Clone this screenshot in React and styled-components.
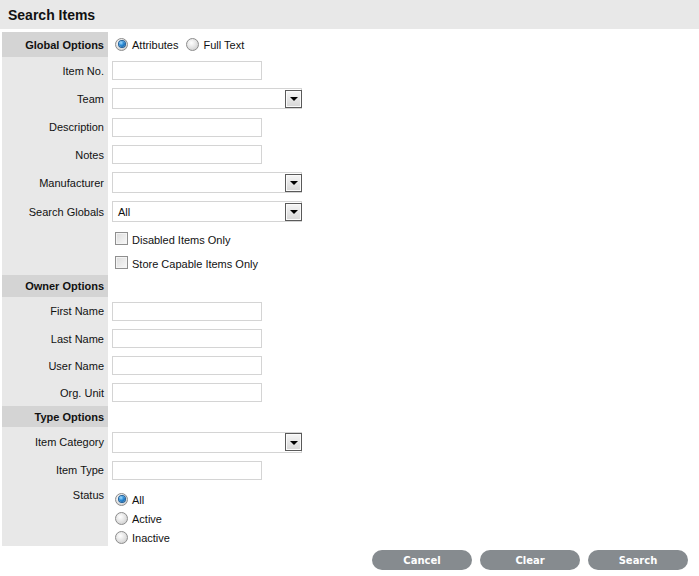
import React from "react";
import styled, { createGlobalStyle } from "styled-components";

///////////////////////////////////

const GlobalStyle = createGlobalStyle`
  body {
    margin: 0;
    background: #ffffff;
    font-family: "Liberation Sans", Arial, sans-serif;
    font-size: 11px;
    color: #111;
  }
`;

const Page = styled.div`
  width: 699px;
`;

const TitleBar = styled.div`
  height: 29px;
  background: #e8e8e8;
  display: flex;
  align-items: center;
  padding-left: 8px;
  font-size: 14px;
  font-weight: bold;
  color: #111;
`;

const Form = styled.div`
  margin-top: 3px;
  padding-left: 2px;
  display: flex;
  flex-direction: column;
`;

const Row = styled.div`
  display: grid;
  grid-template-columns: 106px 1fr;
  height: ${(p) => p.h}px;
`;

const LabelCell = styled.div`
  background: ${(p) => (p.section ? "#d4d4d4" : "#e8e8e8")};
  font-weight: ${(p) => (p.section ? "bold" : "normal")};
  display: flex;
  justify-content: flex-end;
  align-items: ${(p) => (p.top ? "flex-start" : "center")};
  padding-right: 4px;
  padding-top: ${(p) => (p.top ? "6px" : "0")};
  white-space: nowrap;
`;

const FieldCell = styled.div`
  display: flex;
  align-items: ${(p) => (p.top ? "flex-start" : "center")};
  padding-left: 4px;
  gap: 8px;
`;

const TextBox = styled.div`
  width: 150px;
  height: 19px;
  box-sizing: border-box;
  border: 1px solid #d4d4d4;
  background: #fff;
`;

const SelectBox = styled.div`
  width: 190px;
  height: 21px;
  box-sizing: border-box;
  border: 1px solid #d4d4d4;
  background: #fff;
  display: flex;
  align-items: center;
  justify-content: space-between;
  padding-left: 5px;
`;

const ArrowButton = styled.div`
  width: 17px;
  height: 18px;
  box-sizing: border-box;
  border: 1px solid #5a5a5a;
  box-shadow: inset 0 0 0 1px #fafafa;
  background: linear-gradient(#f6f6f6, #d6d6d6);
  display: flex;
  align-items: center;
  justify-content: center;
  margin-right: -1px;

  &::after {
    content: "";
    border-left: 4px solid transparent;
    border-right: 4px solid transparent;
    border-top: 4px solid #000;
    margin-top: 1px;
  }
`;

const Choice = styled.label`
  display: inline-flex;
  align-items: center;
  gap: 4px;
  height: 16px;
  line-height: 13px;
  white-space: nowrap;
  padding-left: ${(p) => (p.inset ? "3px" : "0")};
  margin-top: ${(p) => (p.drop ? `${p.drop}px` : "0")};
`;

const Radio = styled.span`
  flex: none;
  width: 13px;
  height: 13px;
  box-sizing: border-box;
  border-radius: 50%;
  border: 1px solid #8c8c8c;
  background: radial-gradient(circle at 40% 35%, #ffffff 0%, #e6e6e6 45%, #c4c4c4 100%);
  display: inline-flex;
  align-items: center;
  justify-content: center;
  position: relative;
  top: -1px;

  &::after {
    content: "";
    display: ${(p) => (p.checked ? "block" : "none")};
    width: 6px;
    height: 6px;
    border-radius: 50%;
    background: radial-gradient(circle at 35% 30%, #9fdcff 0%, #2a8ad6 45%, #0b4f8f 100%);
    box-shadow: 0 0 0 1px #1f5f99;
  }
`;

const Check = styled.span`
  flex: none;
  width: 13px;
  height: 13px;
  box-sizing: border-box;
  border: 1px solid #8f8f8f;
  box-shadow: inset 0 0 0 1px #f4f4f4;
  background: linear-gradient(135deg, #dcdcdc, #f8f8f8);
  display: inline-block;
  position: relative;
  top: -2px;
`;

const RadioStack = styled.div`
  display: flex;
  flex-direction: column;
  padding-top: 9px;
  gap: 3px;
`;

const ButtonBar = styled.div`
  display: flex;
  justify-content: flex-end;
  gap: 8px;
  padding-right: 11px;
  margin-top: 4px;
`;

const Button = styled.button`
  width: 100px;
  height: 20px;
  border: none;
  border-radius: 10px;
  background: #868b8f;
  color: #fff;
  font-family: "DejaVu Sans", Tahoma, sans-serif;
  font-weight: bold;
  font-size: 10px;
  padding: 0;
  cursor: pointer;
`;

///////////////////////////////////

const Field = ({ label, h = 27, children }) => (
  <Row h={h}>
    <LabelCell>{label}</LabelCell>
    <FieldCell>{children}</FieldCell>
  </Row>
);

const Section = ({ title, h }) => (
  <Row h={h}>
    <LabelCell section>{title}</LabelCell>
    <FieldCell />
  </Row>
);

const Select = ({ value }) => (
  <SelectBox>
    <span>{value}</span>
    <ArrowButton />
  </SelectBox>
);

const App = () => {

  return (

    <Page>

      <GlobalStyle />

      <TitleBar>Search Items</TitleBar>

      <Form>

        <Row h={25}>
          <LabelCell section>Global Options</LabelCell>
          <FieldCell>
            <Choice inset drop={1}><Radio checked />Attributes</Choice>
            <Choice drop={1}><Radio />Full Text</Choice>
          </FieldCell>
        </Row>

        <Field label="Item No." h={27}><TextBox /></Field>
        <Field label="Team" h={29}><Select /></Field>
        <Field label="Description" h={28}><TextBox /></Field>
        <Field label="Notes" h={27}><TextBox /></Field>
        <Field label="Manufacturer" h={29}><Select /></Field>
        <Field label="Search Globals" h={29}><Select value="All" /></Field>
        <Field label="" h={25}><Choice inset drop={3}><Check />Disabled Items Only</Choice></Field>
        <Field label="" h={24}><Choice inset drop={3}><Check />Store Capable Items Only</Choice></Field>

        <Section title="Owner Options" h={22} />

        <Field label="First Name" h={28}><TextBox /></Field>
        <Field label="Last Name" h={27}><TextBox /></Field>
        <Field label="User Name" h={27}><TextBox /></Field>
        <Field label="Org. Unit" h={27}><TextBox /></Field>

        <Section title="Type Options" h={21} />

        <Field label="Item Category" h={30}><Select /></Field>
        <Field label="Item Type" h={26}><TextBox /></Field>

        <Row h={63}>
          <LabelCell top>Status</LabelCell>
          <FieldCell top>
            <RadioStack>
              <Choice inset><Radio checked />All</Choice>
              <Choice inset><Radio />Active</Choice>
              <Choice inset><Radio />Inactive</Choice>
            </RadioStack>
          </FieldCell>
        </Row>

      </Form>

      <ButtonBar>
        <Button>Cancel</Button>
        <Button>Clear</Button>
        <Button>Search</Button>
      </ButtonBar>

    </Page>

  );

};

export default App;
